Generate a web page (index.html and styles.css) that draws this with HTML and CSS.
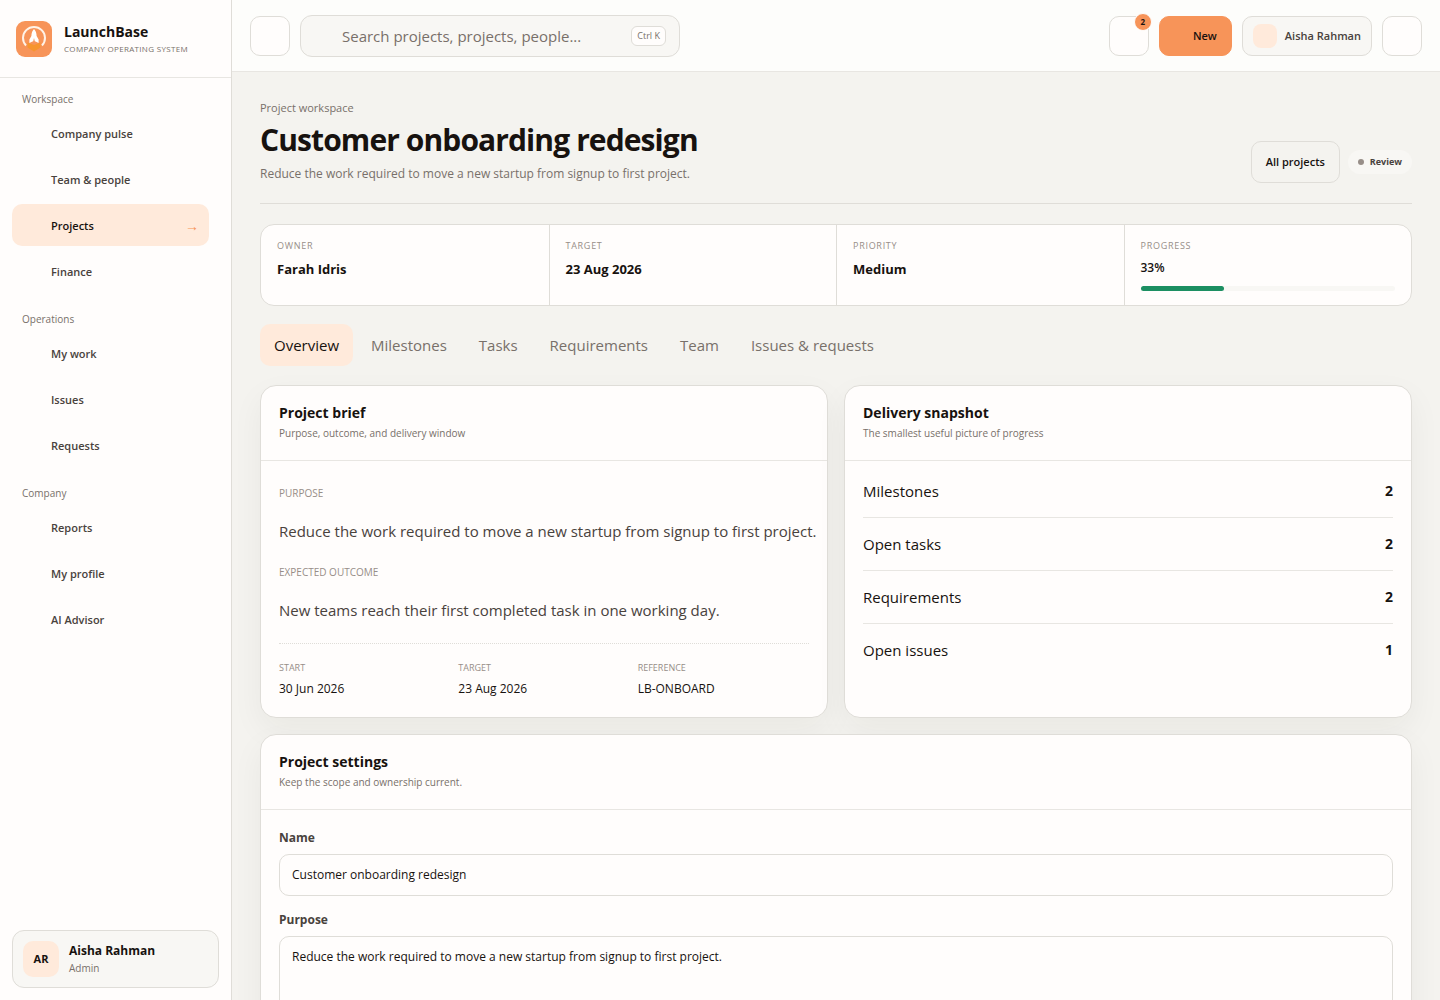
FILE: index.html
```html
<!DOCTYPE html>
<html lang="en">
<head>
    <meta charset="UTF-8">
    <meta name="viewport" content="width=device-width, initial-scale=1.0">
    <title>Customer onboarding redesign - LaunchBase</title>
    <link rel="stylesheet" href="styles.css">
</head>
<body>
    <div class="app">
        <aside class="sidebar">
            <div class="brand">
                <svg class="brand-logo" viewBox="0 0 36 36" aria-hidden="true">
                    <rect width="36" height="36" rx="9" fill="#f79459"/>
                    <path d="M10 24.500A11 11 0 1 1 26 24.500" fill="none" stroke="#fff3e8" stroke-width="2"/>
                    <path d="M11.500 21.500l6.500 2.500 6.500-2.500v5l-6.500 4-6.500-4z" fill="#f7952f"/>
                    <path d="M18 8c1.700 1.800 2.600 4 2.600 7l2 3.500v3.500l-3-1.500h-3.200l-3 1.500v-3.500l2-3.500c0-3 .9-5.200 2.600-7z" fill="#fff"/>
                    <path d="M18 17l1 4h-2z" fill="#f79459"/>
                </svg>
                <div class="brand-text">
                    <strong>LaunchBase</strong>
                    <span>Company operating system</span>
                </div>
            </div>
            <nav class="nav">
                <h2>Workspace</h2>
                <a href="#">Company pulse</a>
                <a href="#">Team &amp; people</a>
                <a href="#" class="active">Projects <span class="arrow">→</span></a>
                <a href="#">Finance</a>
                <h2>Operations</h2>
                <a href="#">My work</a>
                <a href="#">Issues</a>
                <a href="#">Requests</a>
                <h2>Company</h2>
                <a href="#">Reports</a>
                <a href="#">My profile</a>
                <a href="#">AI Advisor</a>
            </nav>
            <div class="account">
                <span class="avatar">AR</span>
                <div class="account-text">
                    <strong>Aisha Rahman</strong>
                    <span>Admin</span>
                </div>
            </div>
        </aside>

        <div class="main">
            <header class="topbar">
                <button type="button" class="icon-btn" aria-label="Toggle sidebar"></button>
                <button type="button" class="search">
                    <span>Search projects, projects, people...</span>
                    <kbd>Ctrl K</kbd>
                </button>
                <div class="topbar-actions">
                    <button type="button" class="icon-btn" aria-label="Notifications"><span class="badge">2</span></button>
                    <button type="button" class="new-btn">New</button>
                    <button type="button" class="profile-btn"><span class="mini-avatar"></span>Aisha Rahman</button>
                    <button type="button" class="icon-btn" aria-label="Sign out"></button>
                </div>
            </header>

            <main class="content">
                <div class="page-head">
                    <div>
                        <p class="eyebrow">Project workspace</p>
                        <h1>Customer onboarding redesign</h1>
                        <p class="lead">Reduce the work required to move a new startup from signup to first project.</p>
                    </div>
                    <div class="head-actions">
                        <a href="#" class="outline-btn">All projects</a>
                        <span class="status">Review</span>
                    </div>
                </div>

                <section class="summary">
                    <div><span>Owner</span><strong>Farah Idris</strong></div>
                    <div><span>Target</span><strong>23 Aug 2026</strong></div>
                    <div><span>Priority</span><strong>Medium</strong></div>
                    <div>
                        <span>Progress</span>
                        <b>33%</b>
                        <div class="progress"><i style="width: 33%"></i></div>
                    </div>
                </section>

                <nav class="tabs">
                    <a href="#" class="active">Overview</a>
                    <a href="#">Milestones</a>
                    <a href="#">Tasks</a>
                    <a href="#">Requirements</a>
                    <a href="#">Team</a>
                    <a href="#">Issues &amp; requests</a>
                </nav>

                <div class="columns">
                    <section class="card">
                        <header class="card-head">
                            <h3>Project brief</h3>
                            <p>Purpose, outcome, and delivery window</p>
                        </header>
                        <div class="card-body brief">
                            <h4>Purpose</h4>
                            <p>Reduce the work required to move a new startup from signup to first project.</p>
                            <h4>Expected outcome</h4>
                            <p>New teams reach their first completed task in one working day.</p>
                            <dl class="facts">
                                <div><dt>Start</dt><dd>30 Jun 2026</dd></div>
                                <div><dt>Target</dt><dd>23 Aug 2026</dd></div>
                                <div><dt>Reference</dt><dd>LB-ONBOARD</dd></div>
                            </dl>
                        </div>
                    </section>

                    <section class="card">
                        <header class="card-head">
                            <h3>Delivery snapshot</h3>
                            <p>The smallest useful picture of progress</p>
                        </header>
                        <ul class="snapshot">
                            <li><span>Milestones</span><strong>2</strong></li>
                            <li><span>Open tasks</span><strong>2</strong></li>
                            <li><span>Requirements</span><strong>2</strong></li>
                            <li><span>Open issues</span><strong>1</strong></li>
                        </ul>
                    </section>
                </div>

                <section class="card">
                    <header class="card-head">
                        <h3>Project settings</h3>
                        <p>Keep the scope and ownership current.</p>
                    </header>
                    <form class="card-body settings">
                        <div class="field">
                            <label for="name">Name</label>
                            <input type="text" id="name" value="Customer onboarding redesign">
                        </div>
                        <div class="field">
                            <label for="purpose">Purpose</label>
                            <textarea id="purpose" rows="4">Reduce the work required to move a new startup from signup to first project.</textarea>
                        </div>
                    </form>
                </section>
            </main>
        </div>
    </div>
</body>
</html>
```
FILE: styles.css
```css
:root {
    --ink: #17120f;
    --text: #49423d;
    --muted: #78706a;
    --faint: #978e88;
    --line: #dfddd8;
    --line-soft: #e8e6e2;
    --surface: #fffdfc;
    --soft: #f8f7f4;
    --page: #f4f3ef;
    --orange: #f79459;
    --peach: #ffeadb;
    --green: #1c8f62;
}
* {
    box-sizing: border-box;
}
body {
    margin: 0;
    height: 100vh;
    overflow: hidden;
    font-family: "Open Sans", "Noto Sans", sans-serif;
    font-size: 15px;
    line-height: 24px;
    color: var(--ink);
    background: var(--page);
}
h1, h2, h3, h4, p, ul, dl, dd {
    margin: 0;
    padding: 0;
}
a {
    color: inherit;
    text-decoration: none;
}
button, input, textarea {
    font: inherit;
    color: inherit;
}
.app {
    display: grid;
    grid-template-columns: 232px 1fr;
    height: 100vh;
}

/* sidebar */
.sidebar {
    display: flex;
    flex-direction: column;
    min-height: 0;
    background: var(--surface);
    border-right: 1px solid var(--line);
}
.brand {
    display: flex;
    align-items: center;
    gap: 12px;
    height: 78px;
    padding: 0 16px;
    border-bottom: 1px solid var(--line-soft);
}
.brand-logo {
    width: 36px;
    height: 36px;
}
.brand-text {
    display: flex;
    flex-direction: column;
}
.brand-text strong {
    font-size: 14px;
    line-height: 20px;
}
.brand-text span {
    font-size: 8px;
    line-height: 14px;
    font-weight: 500;
    letter-spacing: 0.04em;
    text-transform: uppercase;
    color: var(--muted);
}
.nav {
    flex: 1;
    display: flex;
    flex-direction: column;
    gap: 4px;
    padding: 12px 22px 12px 12px;
}
.nav h2 {
    padding: 0 10px;
    font-size: 10px;
    line-height: 18px;
    font-weight: 500;
    color: var(--muted);
}
.nav a + h2 {
    margin-top: 14px;
}
.nav a {
    display: flex;
    align-items: center;
    justify-content: space-between;
    height: 42px;
    padding: 2px 10px 0 39px;
    border-radius: 10px;
    font-size: 11px;
    font-weight: 600;
    color: var(--text);
}
.nav a.active {
    color: var(--ink);
    background: var(--peach);
}
.arrow {
    font-size: 14px;
    color: var(--orange);
}
.account {
    display: flex;
    align-items: center;
    gap: 10px;
    height: 58px;
    margin: 12px;
    padding: 0 10px;
    border: 1px solid var(--line);
    border-radius: 12px;
    background: var(--soft);
}
.avatar {
    display: grid;
    place-items: center;
    width: 36px;
    height: 36px;
    border-radius: 10px;
    font-size: 11px;
    font-weight: 700;
    background: var(--peach);
}
.account-text {
    display: flex;
    flex-direction: column;
}
.account-text strong {
    font-size: 12px;
    line-height: 18px;
}
.account-text span {
    font-size: 10px;
    line-height: 16px;
    color: var(--muted);
}

/* top bar */
.main {
    min-width: 0;
    overflow: hidden;
}
.topbar {
    display: flex;
    align-items: center;
    gap: 10px;
    height: 72px;
    padding: 0 18px;
    background: #fdfdfb;
    border-bottom: 1px solid var(--line-soft);
}
.icon-btn {
    position: relative;
    width: 40px;
    height: 40px;
    padding: 0;
    border: 1px solid var(--line);
    border-radius: 10px;
    background: var(--surface);
}
.badge {
    position: absolute;
    top: -4px;
    right: -4px;
    width: 18px;
    height: 18px;
    border: 1px solid var(--surface);
    border-radius: 50%;
    font-size: 8px;
    line-height: 16px;
    font-weight: 700;
    background: var(--orange);
}
.search {
    display: flex;
    align-items: center;
    justify-content: space-between;
    width: 380px;
    height: 42px;
    padding: 0 13px 0 41px;
    border: 1px solid var(--line);
    border-radius: 12px;
    color: var(--muted);
    background: var(--soft);
}
.search kbd {
    padding: 0 5px;
    border: 1px solid var(--line);
    border-radius: 6px;
    font-family: inherit;
    font-size: 9px;
    line-height: 18px;
    background: var(--surface);
}
.topbar-actions {
    display: flex;
    gap: 10px;
    margin-left: auto;
}
.new-btn,
.profile-btn {
    height: 40px;
    border-radius: 10px;
    font-size: 11px;
    font-weight: 600;
}
.new-btn {
    padding: 0 14px 0 33px;
    border: 1px solid var(--orange);
    background: var(--orange);
}
.profile-btn {
    display: flex;
    align-items: center;
    gap: 8px;
    padding: 0 10px;
    border: 1px solid var(--line);
    color: var(--text);
    background: var(--soft);
}
.mini-avatar {
    width: 24px;
    height: 24px;
    border-radius: 8px;
    background: var(--peach);
}

/* page */
.content {
    display: flex;
    flex-direction: column;
    padding: 28px;
}
.page-head {
    display: flex;
    align-items: flex-end;
    justify-content: space-between;
    padding-bottom: 20px;
    border-bottom: 1px solid var(--line);
}
.eyebrow {
    font-size: 11px;
    line-height: 16px;
    font-weight: 500;
    color: var(--muted);
}
h1 {
    margin: 6px 0;
    font-size: 30px;
    line-height: 36px;
    letter-spacing: -0.03em;
}
.lead {
    font-size: 12px;
    line-height: 19px;
    color: var(--muted);
}
.head-actions {
    display: flex;
    align-items: center;
    gap: 8px;
}
.outline-btn {
    padding: 8px 14px;
    border: 1px solid var(--line);
    border-radius: 10px;
    font-size: 11px;
    font-weight: 600;
}
.status {
    display: flex;
    align-items: center;
    gap: 6px;
    padding: 0 10px;
    border-radius: 12px;
    font-size: 9px;
    font-weight: 700;
    color: var(--text);
    background: var(--soft);
}
.status::before {
    content: "";
    width: 6px;
    height: 6px;
    border-radius: 50%;
    background: var(--faint);
}
.summary {
    display: grid;
    grid-template-columns: repeat(4, 1fr);
    margin-top: 20px;
    border: 1px solid var(--line);
    border-radius: 14px;
    background: var(--surface);
}
.summary > div {
    display: flex;
    flex-direction: column;
    padding: 14px 16px;
}
.summary > div + div {
    border-left: 1px solid var(--line);
}
.summary span {
    font-size: 9px;
    line-height: 14px;
    letter-spacing: 0.08em;
    text-transform: uppercase;
    color: var(--faint);
}
.summary strong {
    margin-top: 6px;
    font-size: 13px;
    line-height: 20px;
}
.summary b {
    margin-top: 6px;
    font-size: 12px;
    line-height: 18px;
    font-weight: 600;
}
.progress {
    height: 5px;
    margin-top: 9px;
    border-radius: 3px;
    background: var(--soft);
}
.progress i {
    display: block;
    height: 5px;
    border-radius: 3px;
    background: var(--green);
}
.tabs {
    display: flex;
    gap: 4px;
    margin: 18px 0 19px;
}
.tabs a {
    padding: 9px 14px;
    border-radius: 10px;
    color: var(--muted);
}
.tabs a.active {
    color: var(--ink);
    background: var(--peach);
}

/* cards */
.columns {
    display: grid;
    grid-template-columns: 1fr 1fr;
    gap: 16px;
    margin-bottom: 16px;
}
.card {
    min-width: 0;
    border: 1px solid var(--line);
    border-radius: 16px;
    background: var(--surface);
    box-shadow: 0 12px 32px rgba(40, 30, 20, 0.05);
}
.card-head {
    padding: 16px 18px;
    border-bottom: 1px solid var(--line-soft);
}
.card-head h3 {
    font-size: 14px;
    line-height: 22px;
}
.card-head p {
    margin-bottom: 2px;
    font-size: 10px;
    line-height: 18px;
    color: var(--muted);
}
.card-body {
    padding: 18px;
}
.brief {
    padding-top: 24px;
}
.brief h4 {
    font-size: 10px;
    line-height: 16px;
    font-weight: 400;
    text-transform: uppercase;
    color: var(--faint);
}
/* paragraphs run slightly into the card padding */
.brief p {
    margin: 18px -10px 20px 0;
    line-height: 25px;
    color: var(--text);
}
.facts {
    display: grid;
    grid-template-columns: repeat(3, 1fr);
    gap: 8px;
    padding-top: 16px;
    border-top: 1px dotted var(--line);
}
.facts dt {
    font-size: 9px;
    line-height: 16px;
    text-transform: uppercase;
    color: var(--faint);
}
.facts dd {
    margin-top: 3px;
    font-size: 12px;
    line-height: 20px;
}
.snapshot {
    padding: 4px 18px;
    list-style: none;
}
.snapshot li {
    display: flex;
    align-items: center;
    justify-content: space-between;
    padding: 14px 0;
}
.snapshot li + li {
    border-top: 1px solid var(--line-soft);
}
.snapshot strong {
    font-size: 14px;
}
.settings {
    display: flex;
    flex-direction: column;
    gap: 14px;
}
.field {
    display: flex;
    flex-direction: column;
    gap: 6px;
}
.field label {
    font-size: 12px;
    line-height: 20px;
    font-weight: 700;
    color: var(--text);
}
.field input,
.field textarea {
    width: 100%;
    padding: 10px 12px;
    border: 1px solid var(--line);
    border-radius: 10px;
    font-size: 12px;
    line-height: 20px;
    background: var(--surface);
    resize: vertical;
}
```
